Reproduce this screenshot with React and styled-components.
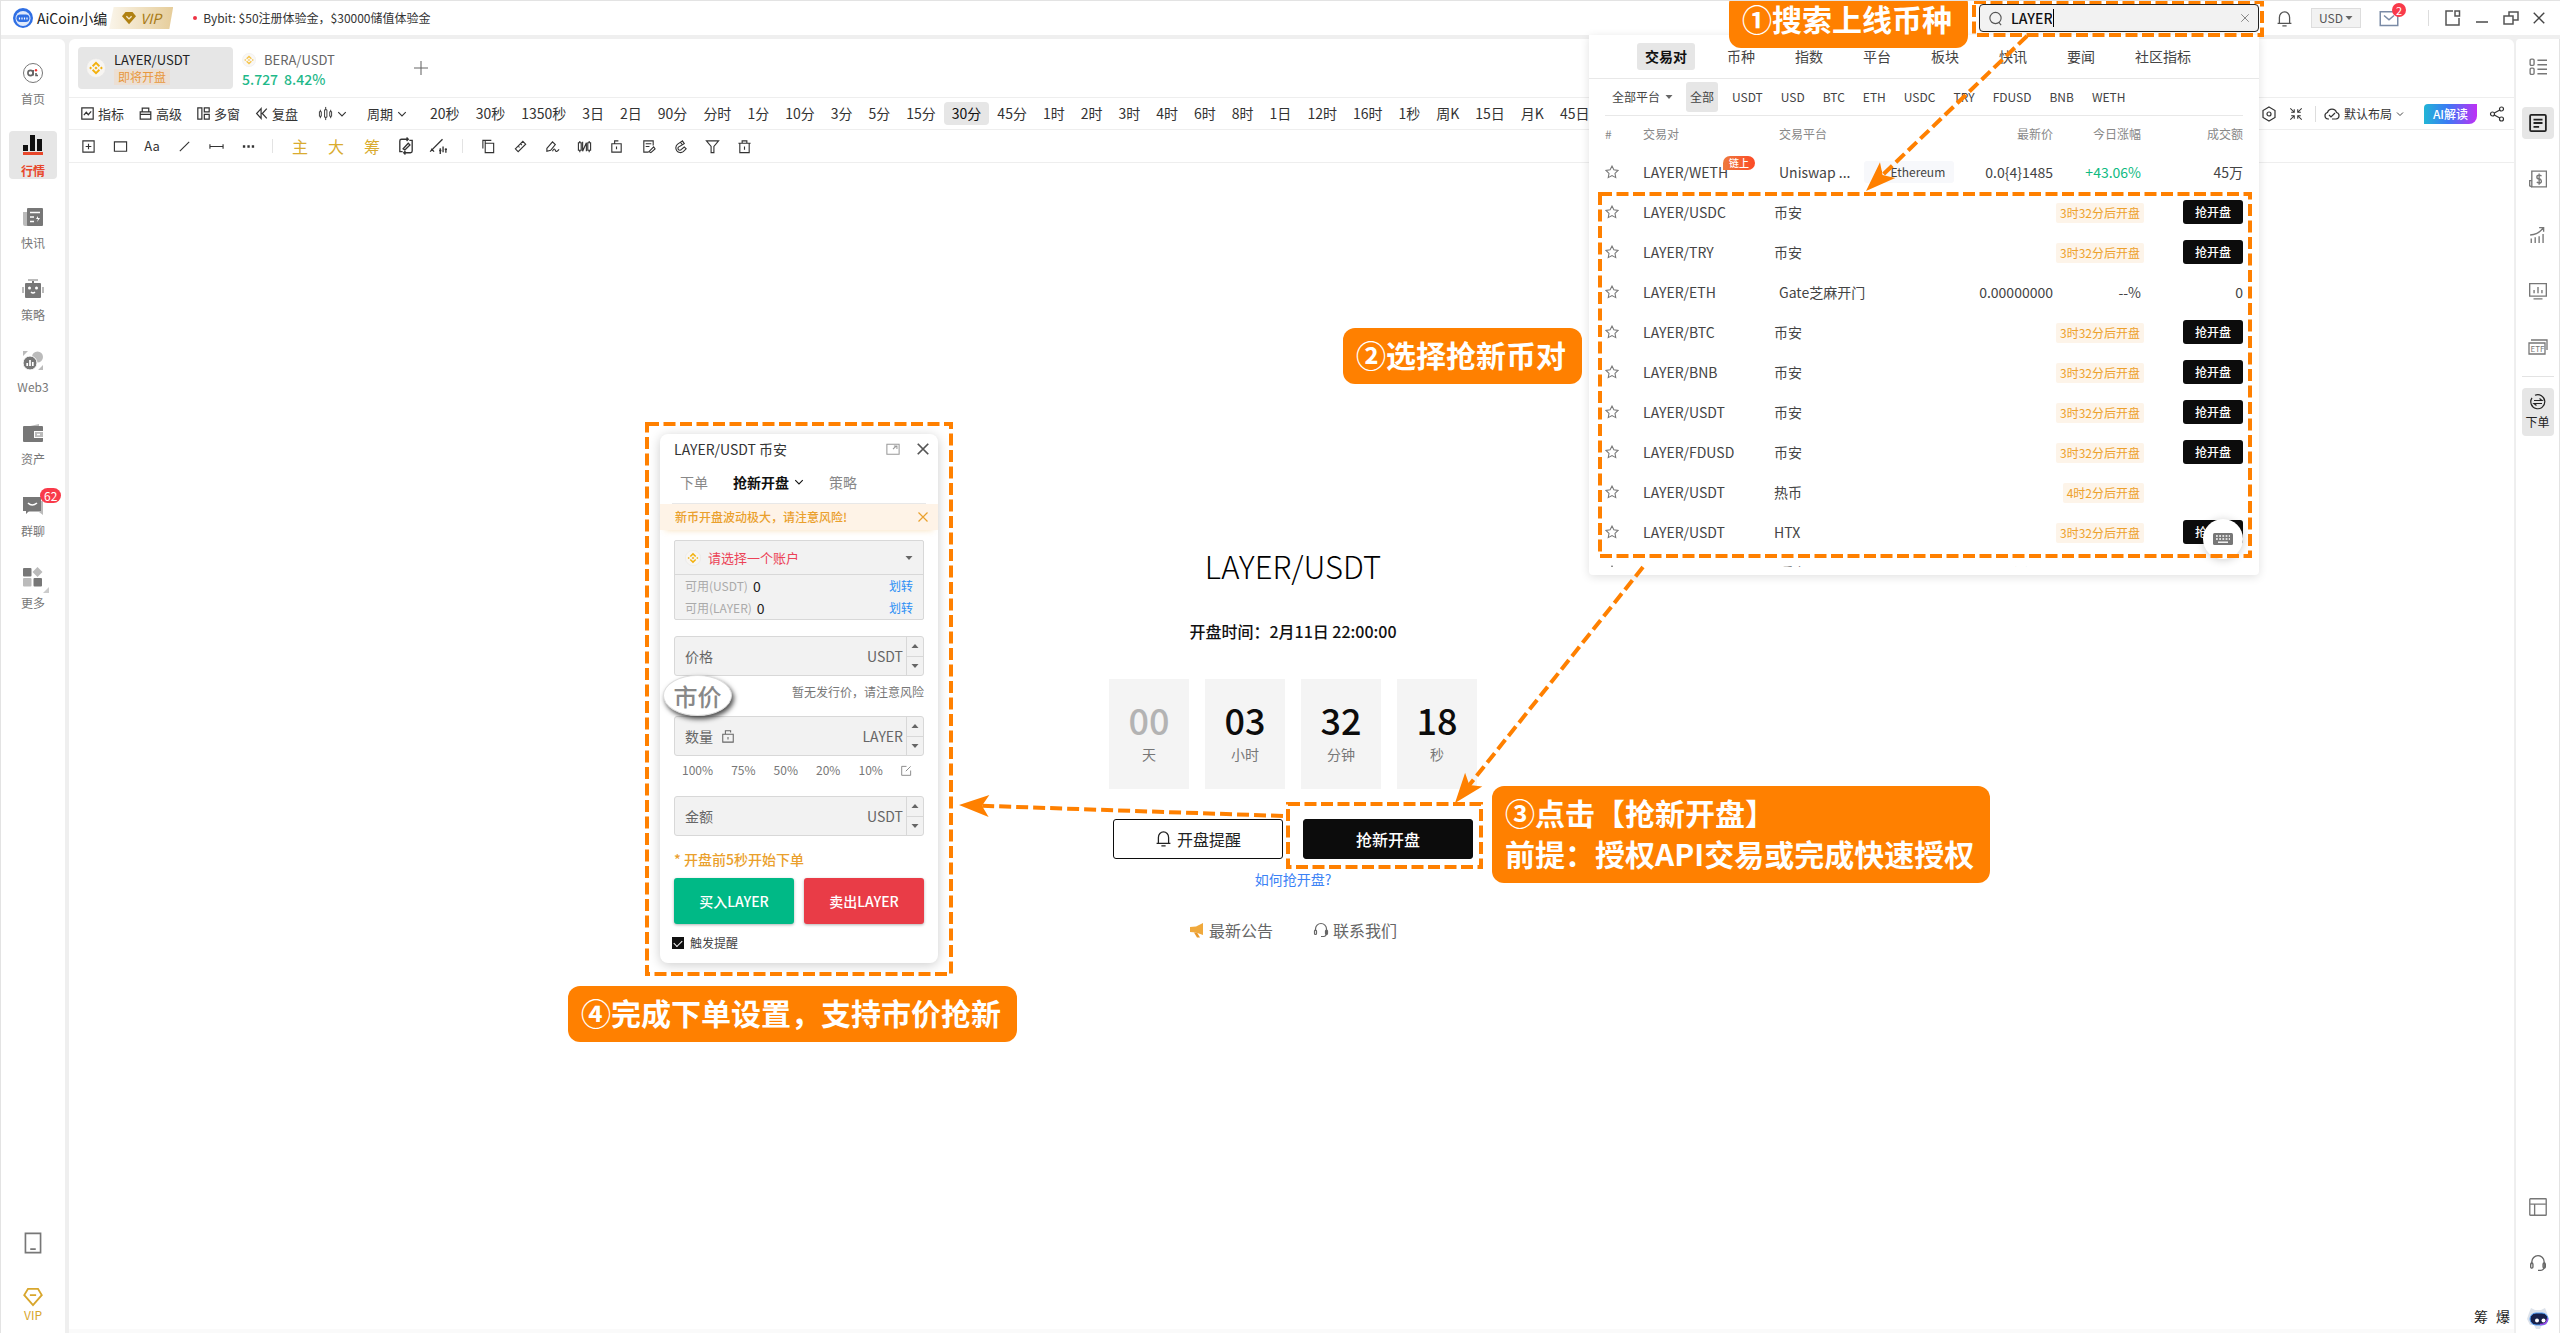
import styled, { createGlobalStyle } from "styled-components";

const GlobalStyle = createGlobalStyle`
    * { box-sizing: border-box; }
    body {
        margin: 0; background: #efefef; color: #333;
        font-family: "Noto Sans CJK SC", "Noto Sans", sans-serif; font-size: 14px; line-height: 20px;
    }
    button, input, select { font: inherit; color: inherit; background: none; border: 0; padding: 0; margin: 0; }
    button { cursor: pointer; white-space: nowrap; }
    a { color: inherit; text-decoration: none; }
    svg { display: block; flex: none; }
`

/* ---------- icons ---------- */

function Icon({ size = 16, color = "currentColor", width = 1.2, children }) {
    return (
        <svg width={size} height={size} viewBox="0 0 16 16" fill="none" stroke={color} strokeWidth={width}>
            {children}
        </svg>
    )
}

const Chevron = ({ size = 10 }) => <Icon size={size} width={1.8}><path d="M2 5l6 6 6-6" /></Icon>
const Caret = ({ size = 8, up }) => <Icon size={size}><path d={up ? "M1 12h14L8 4z" : "M1 4h14L8 12z"} fill="#666" stroke="none" /></Icon>
const Cross = ({ size = 12, color, width = 1.6 }) => <Icon size={size} color={color} width={width}><path d="M2 2l12 12M14 2L2 14" /></Icon>
const Bell = ({ size = 16 }) => <Icon size={size}><path d="M3.2 12.5V7a4.8 5.2 0 0 1 9.6 0v5.5M1.5 12.5h13M6 15h4" /></Icon>
const Star = () => <Icon size={14} color="#777"><path d="M8 1.2l2.1 4.3 4.8.7-3.5 3.4.9 4.8L8 12.1l-4.3 2.3.9-4.8L1.1 6.2l4.8-.7z" /></Icon>
const Headset = ({ size = 18, color }) => (
    <Icon size={size} color={color}>
        <path d="M2.5 9V7a5.5 5.5 0 0 1 11 0v4a3 3 0 0 1-3 3.5H8" />
        <rect x="1.5" y="8" width="2" height="4.5" rx="1" /><rect x="12.5" y="8" width="2" height="4.5" rx="1" />
    </Icon>
)
const Binance = ({ size = 20, faded }) => (
    <svg width={size} height={size} viewBox="0 0 20 20" opacity={faded ? 0.75 : 1}>
        <circle cx="10" cy="10" r="9.5" fill="#f7f5f2" stroke="#e4e4e4" strokeWidth=".6" />
        <g fill="none" stroke="#f3b10d" strokeWidth="1.9">
            <path d="M6.6 8.2L10 4.9l3.4 3.3M6.6 11.8L10 15.1l3.4-3.3" />
        </g>
        <path d="M10 8.4l1.6 1.6-1.6 1.6L8.4 10zM4.6 8.6L6 10l-1.4 1.4L3.2 10zM15.4 8.6l1.4 1.4-1.4 1.4L14 10z" fill="#f3b10d" />
    </svg>
)
const Avatar = () => (
    <svg width="20" height="20" viewBox="0 0 20 20">
        <circle cx="10" cy="10" r="10" fill="#2f6fe4" />
        <circle cx="10" cy="10.5" r="7.5" fill="#dfe9fb" />
        <rect x="3.5" y="6.5" width="13" height="7.5" rx="3.7" fill="#2f6fe4" />
        <path d="M6.5 11.5V9.5M9 11.5V9.5M11.5 11.5V9.5M14 11.5V9.5" stroke="#fff" strokeWidth="1.2" />
    </svg>
)
const Gem = () => <svg width="14" height="14" viewBox="0 0 16 16"><path d="M4 1h8l4 5-8 9-8-9z" fill="#b08112" /><path d="M5 6l3 3 3-3" stroke="#f6e8c8" strokeWidth="1.6" fill="none" /></svg>
const Robot = () => (
    <svg width="24" height="24" viewBox="0 0 24 24">
        <path d="M3 6l2-5 4 2h6l4-2 2 5 2 6-3 6h-4l-2 4h-4l-2-4H4l-3-6z" fill="#dde2ea" />
        <rect x="4" y="6" width="18" height="12" rx="6" fill="#17204a" stroke="#4e9af5" />
        <path d="M14 17.5c5 0 7.500-2 7.500-6" stroke="#a04af0" strokeWidth="1.5" fill="none" />
        <circle cx="11" cy="13.5" r="2" fill="#fff" /><circle cx="17.5" cy="13.5" r="2" fill="#fff" />
    </svg>
)

/* ---------- window header ---------- */

const Page = styled.div`
    position: relative; min-height: 100vh; overflow: hidden;
    display: flex; flex-direction: column;
    border-top: 1px solid #e3e3e3; border-left: 1px solid #e3e3e3;
`

const Header = styled.header`
    height: 34px; padding: 0 14px 0 12px; background: #fff;
    display: flex; align-items: center;
`

const UserName = styled.span`
    margin: 0 2px 0 4px; color: #222;
`

const VipBadge = styled.a`
    width: 64px; height: 22px; padding-left: 13px;
    display: flex; align-items: center; column-gap: 4px;
    background: linear-gradient(90deg, #faf5ea, #e6cd9a);
    clip-path: polygon(7% 0, 100% 0, 94% 100%, 0 100%);
    color: #a87b16; font-style: italic;
`

const Notice = styled.a`
    margin-left: 20px; display: flex; align-items: center; column-gap: 6px;
    font-size: 12px; color: #333;
    &::before { content: ""; width: 4px; height: 4px; border-radius: 2px; background: #ee3344; }
`

const SearchBox = styled.label`
    width: 280px; height: 28px; margin-left: auto; padding: 0 8px;
    display: flex; align-items: center; column-gap: 8px;
    background: #f2f2f2; border: 1px solid #222; border-radius: 4px; color: #555;
`

const SearchInput = styled.input`
    width: 41px; color: #111; font-weight: 500; outline: none;
`

const TextCursor = styled.i`
    width: 1px; height: 18px; margin: 0 auto 0 -7px; background: #000;
`

const HeaderTools = styled.div`
    margin-left: 17px; display: flex; align-items: center; color: #555;
`

const CurrencyBox = styled.label`
    width: 50px; height: 20px; margin: 0 18px; padding: 0 7px;
    display: flex; align-items: center; justify-content: space-between;
    background: #f2f2f2; border: 1px solid #ddd; font-size: 12px; line-height: 16px;
`

const PlainSelect = styled.select`
    appearance: none; outline: none; line-height: inherit;
`

const MailButton = styled.button`
    position: relative; padding-right: 29px;
`

const Badge = styled.span`
    position: absolute; top: ${props => props.$top}; left: ${props => props.$left};
    min-width: 14px; padding: 0 4px; border-radius: 8px;
    background: #f93a4a; color: #fff; font-size: ${props => props.$big ? "12px" : "11px"};
    line-height: ${props => props.$big ? "15px" : "14px"}; text-align: center; font-weight: 400;
`

const WindowButtons = styled.div`
    height: 16px; padding-left: 16px; border-left: 1px solid #ddd;
    display: flex; align-items: center; column-gap: 13px;
`

function TopBar() {
    return (
        <Header>
            <Avatar />
            <UserName>AiCoin小编</UserName>
            <VipBadge href="#vip"><Gem />VIP</VipBadge>
            <Notice href="#notice">Bybit: $50注册体验金，$30000储值体验金</Notice>
            <SearchBox>
                <Icon size={15}><circle cx="8" cy="7.5" r="6" /><path d="M11.5 12l2.500 3" /></Icon>
                <SearchInput defaultValue="LAYER" aria-label="搜索" />
                <TextCursor />
                <Cross size={10} color="#888" />
            </SearchBox>
            <HeaderTools>
                <button aria-label="通知"><Bell size={17} /></button>
                <CurrencyBox>
                    <PlainSelect aria-label="计价货币"><option>USD</option></PlainSelect>
                    <Caret />
                </CurrencyBox>
                <MailButton aria-label="消息">
                    <Icon size={20} color="#7a8ba6"><path d="M1 3h14v11H1zM4 6l4 3.500L12 6" /></Icon>
                    <Badge $top="-5px" $left="13px">2</Badge>
                </MailButton>
                <WindowButtons>
                    <button aria-label="停靠"><Icon width={1.5}><path d="M8 1H1v14h13V8" /><rect x="10" y="1" width="4.5" height="5" /></Icon></button>
                    <button aria-label="最小化"><Icon width={1.6}><path d="M2 12h12" /></Icon></button>
                    <button aria-label="还原"><Icon width={1.5}><path d="M1 6h9v8H1zM6 6V2h9v8h-5" /></Icon></button>
                    <button aria-label="关闭"><Cross size={14} color="#444" /></button>
                </WindowButtons>
            </HeaderTools>
        </Header>
    )
}

/* ---------- left navigation ---------- */

const Body = styled.div`
    flex: 1; margin-top: 4px; display: flex; column-gap: 4px;
`

const SideNav = styled.nav`
    width: 64px; padding: 20px 0 10px; background: #fff; border-radius: 0 6px 0 0;
    display: flex; flex-direction: column; align-items: center; row-gap: 24px;
`

const NavItem = styled.a`
    position: relative; width: 48px; height: 48px; padding-top: 4px; border-radius: 4px;
    display: flex; flex-direction: column; align-items: center; row-gap: 8px;
    background: ${props => props.$active ? "#e6e6e6" : "none"};
    color: ${props => props.$active ? "#e8472b" : "#777"};
    font-size: 12px; line-height: 16px; font-weight: ${props => props.$active ? 700 : 400};
`

const NavBottom = styled.div`
    margin-top: auto; display: flex; flex-direction: column; align-items: center; row-gap: 33px;
`

const VipLink = styled.a`
    display: flex; flex-direction: column; align-items: center;
    color: #d8a62c; font-size: 12px; line-height: 16px;
`

const NAV = [
    ["首页", <g><ellipse cx="10" cy="10" rx="9.5" ry="9.5" fill="none" stroke="#777" /><circle cx="7.5" cy="10" r="2.6" fill="none" stroke="#666" strokeWidth="1.6" /><path d="M10.2 7v5.500M13 10v2.500h2" fill="none" stroke="#666" strokeWidth="1.6" /><circle cx="13" cy="7.2" r="1.2" fill="#e33" /></g>],
    ["行情", <g><path d="M0 10h5v6H0zM7 0h5v16H7zM14 4h5v12h-5z" fill="#111" /><path d="M0 17h20v3H0z" fill="#e8472b" /></g>],
    ["快讯", <g><path d="M0 5h5v14H2a2 2 0 0 1-2-2z" fill="#bbb" /><rect x="4" y="1" width="16" height="18" rx="1" fill="#777" /><path d="M7 5.500h10M7 10h4M7 14.500h4" stroke="#fff" strokeWidth="1.5" /><path d="M15 9l-2 3h2l-1 3 3-4h-2z" fill="#fff" /></g>],
    ["策略", <g><path d="M5 1h10M0 8v6M20 8v6" stroke="#bbb" strokeWidth="2" /><path d="M10 2v3" stroke="#777" strokeWidth="2" /><rect x="2" y="4" width="16" height="15" rx="1" fill="#777" /><circle cx="6.5" cy="9" r="1.5" fill="#fff" /><circle cx="13.5" cy="9" r="1.5" fill="#fff" /><path d="M8 13q2 2 4 0" stroke="#fff" strokeWidth="1.5" fill="none" /></g>],
    ["Web3", <g><path d="M0 0h5L0 5zM20 14v5h-5z" fill="#bbb" /><circle cx="14.5" cy="6" r="5.5" fill="#bbb" /><ellipse cx="7" cy="12" rx="7" ry="7" fill="#777" stroke="#fff" /><path d="M4.2 15v-3M7 15V9M9.800 15v-4" stroke="#fff" strokeWidth="1.7" /></g>],
    ["资产", <g><path d="M3 4l13-3v4z" fill="#bbb" /><rect y="3" width="20" height="16" rx="1" fill="#777" /><rect x="11" y="8" width="9" height="7" fill="#fff" /><rect x="12" y="9" width="8" height="5" fill="#bbb" /><path d="M14 11.500h3" stroke="#fff" strokeWidth="1.5" /></g>],
    ["群聊", <g><path d="M5 6h15v14l-4-3H5z" fill="#bbb" /><path d="M0 2h18v14H6l-3 3v-3H0z" fill="#777" /><path d="M5 8q4 4 9 0" stroke="#fff" strokeWidth="1.6" fill="none" /></g>],
    ["更多", <g><rect y="1" width="8.5" height="8.5" rx="1" fill="#777" /><path d="M14.5 0l5 5-5 5-5-5z" fill="#bbb" /><rect y="11" width="8.5" height="8.5" rx="1" fill="#bbb" /><rect x="10.5" y="11" width="8.5" height="8.5" rx="1" fill="#777" /><path d="M26 20v6h-6z" fill="#ccc" /></g>],
]

function LeftNav() {
    return (
        <SideNav>
            {NAV.map(([name, art]) => (
                <NavItem key={name} href="#nav" $active={name == "行情"}>
                    <svg width="20" height="20" viewBox="0 0 20 20" overflow="visible">{art}</svg>
                    {name}
                    {name == "群聊" && <Badge $big $top="-3px" $left="31px">62</Badge>}
                </NavItem>
            ))}
            <NavBottom>
                <a href="#mobile" aria-label="手机版"><Icon size={22} color="#777"><path d="M2.500 1h11v14h-11zM6 12.500h4" /></Icon></a>
                <VipLink href="#vip">
                    <Icon size={20} width={1.5}><path d="M4 1.500h8l3 5-7 8-7-8zM5.500 6.500h5" /></Icon>
                    VIP
                </VipLink>
            </NavBottom>
        </SideNav>
    )
}

/* ---------- right tool rail ---------- */

const RightRail = styled.nav`
    width: 45px; margin-left: -3px; padding-top: 12px; background: #fff;
    border-left: 1px solid #eee; border-right: 1px solid #e3e3e3; border-radius: 4px 0 0 0;
    display: flex; flex-direction: column; align-items: center; row-gap: 24px; color: #777;
`

const RailButton = styled.button`
    width: 32px; height: ${props => props.$height || "32px"}; border-radius: 4px;
    display: flex; flex-direction: column; align-items: center; justify-content: center; row-gap: 3px;
    background: ${props => props.$active ? "#e6e6e6" : "none"};
    color: ${props => props.$active ? "#222" : "#777"};
    font-size: 12px; line-height: 18px;
`

const RailTrade = styled.div`
    padding-top: 11px; margin-top: -11px; border-top: 1px solid #e3e3e3;
`

const RailBottom = styled.div`
    margin-top: auto; display: flex; flex-direction: column; align-items: center; row-gap: 28px;
`

function ToolRail() {
    return (
        <RightRail>
            <RailButton aria-label="自选"><Icon size={18}><rect x="1" y="1" width="3.5" height="5.5" rx="1" /><rect x="1" y="9" width="3.5" height="5.5" rx="1" /><path d="M7.500 2H16M7.500 6H16M7.500 10H16M7.500 14H16" /></Icon></RailButton>
            <RailButton aria-label="资讯" $active><Icon size={18} width={1.6}><rect x="1" y=".8" width="14" height="14.4" rx="1" /><path d="M4 5h8M4 8h8M4 11.500h5" /></Icon></RailButton>
            <RailButton aria-label="资金"><Icon size={18}><path d="M2.500 9V1h13v14h-13z" /><path d="M2.500 9.500H.600V14l2 1M11 5.500Q10.500 4.500 9 4.500 7 4.500 7 6.200T9 8t2 1.900-2 1.700q-1.500 0-2-1M9 3.200v9.800" /></Icon></RailButton>
            <RailButton aria-label="趋势"><Icon size={18}><path d="M2 15v-4M5.500 15v-5M9 15V9M12.500 15V7M1 8q7-.5 11.500-6M9 1.500h4V5" /></Icon></RailButton>
            <RailButton aria-label="盘面"><Icon size={18}><path d="M.600 1.500h14.800v11H.600zM4.500 10V7M8 10V4.500M11.500 10V7M4 15h8" /></Icon></RailButton>
            <RailButton aria-label="ETF">
                <svg width="20" height="16" viewBox="0 0 20 16" fill="none" stroke="#777" strokeWidth="1.3">
                    <path d="M1 4h16v11H1zM3 1h16v10" /><text x="2.5" y="12.5" fontSize="8" fill="#777" stroke="none">ETF</text>
                </svg>
            </RailButton>
            <RailTrade>
                <RailButton $active $height="48px">
                    <Icon size={16}><path d="M5 1.300a7 7 0 1 1-3 2.500M4 6.500h8L9.500 4.500M12 9.500H4l2.500 2" /></Icon>
                    下单
                </RailButton>
            </RailTrade>
            <RailBottom>
                <RailButton $height="28px" aria-label="布局"><Icon size={18}><rect x=".7" y=".7" width="14.6" height="14.6" rx=".5" /><path d="M1 5.500h14M5 5.500V15" /></Icon></RailButton>
                <RailButton $height="28px" aria-label="客服"><Headset size={18} color="#666" /></RailButton>
                <RailButton $height="28px" aria-label="AI助手"><Robot /></RailButton>
            </RailBottom>
        </RightRail>
    )
}

/* ---------- chart area ---------- */

const Main = styled.main`
    flex: 1; min-width: 0; background: #fff; border-radius: 6px 6px 0 0;
    display: flex; flex-direction: column;
`

const PairTabs = styled.div`
    height: 59px; padding: 8px 9px; border-bottom: 1px solid #eee;
    display: flex; align-items: flex-start;
`

const ActivePair = styled.button`
    width: 155px; height: 42px; padding-left: 8px; border-radius: 4px; background: #e6e6e6;
    display: flex; align-items: center; column-gap: 8px;
    color: #222; font-size: 13px; line-height: 18px; text-align: left;
`

const OpeningTag = styled.span`
    display: block; width: 56px; padding: 0 4px; background: #ecdfd3; color: #e8983c;
    font-size: 12px; line-height: 16px;
`

const PairTab = styled.button`
    height: 42px; padding: 4px 9px; text-align: left; color: #666; font-size: 13px; line-height: 18px;
`

const PairName = styled.span`
    display: flex; align-items: center; column-gap: 8px;
`

const PairQuote = styled.span`
    display: flex; column-gap: 6px; color: #1fb98a; font-size: 14px; line-height: 20px; font-weight: 500;
`

const AddTab = styled.button`
    margin: 14px 0 0 70px; color: #666;
`

const ToolRow = styled.div`
    height: ${props => props.$height}; padding: 0 9px 0 12px; border-bottom: 1px solid #eee;
    display: flex; align-items: center; overflow: hidden; color: #333;
`

const ToolButton = styled.button`
    display: flex; align-items: center; column-gap: 4px;
    font-size: 13px; margin-right: ${props => props.$space || "15px"};
`

const Period = styled.button`
    height: 23px; padding: 0 8px; border-radius: 4px; line-height: 23px;
    background: ${props => props.$active ? "#e6e6e6" : "none"};
    color: ${props => props.$active ? "#111" : "#333"};
`

const LayoutTools = styled.div`
    margin-left: auto; display: flex; align-items: center; column-gap: 12px; font-size: 12px;
`

const LayoutButton = styled.button`
    height: 16px; padding-left: 8px; border-left: 1px solid #ddd; margin-right: 8px;
    display: flex; align-items: center; column-gap: 4px; line-height: 16px;
`

const AiButton = styled.button`
    width: 53px; height: 20px; border-radius: 4px 0 8px 0; color: #fff; font-weight: 500; line-height: 20px;
    background: linear-gradient(90deg, #21b5d6, #3c79f5 45%, #c02ff5);
`

const DrawButtons = styled.div`
    margin-left: -9px; display: flex; align-items: center;
`

const DrawButton = styled.button`
    width: ${props => props.$wide ? "36px" : "32px"};
    display: flex; justify-content: center; font-size: ${props => props.$wide ? "16px" : "13px"};
    color: ${props => props.$wide ? "#d9ab2f" : "#333"};
`

const Divider = styled.i`
    width: 1px; height: 14px; margin: 0 9px 0 8px; background: #e3e3e3;
`

const PERIODS = ["20秒", "30秒", "1350秒", "3日", "2日", "90分", "分时", "1分", "10分", "3分", "5分", "15分", "30分", "45分",
    "1时", "2时", "3时", "4时", "6时", "8时", "1日", "12时", "16时", "1秒", "周K", "15日", "月K", "45日"]

const SHAPES = [
    ["锚点", <path d="M2 2h12v12H2zM8 5v6M5 8h6" />],
    ["矩形", <path d="M1.500 3h13v10h-13z" />],
    ["文字", null],
    ["线段", <path d="M3 13L13 3" />],
    ["水平线", <path d="M1 8h14M1 5.500v5M15 5.500v5" />],
    ["更多图形", <path d="M2 8h2.500M6.800 8h2.500M11.500 8H14" strokeWidth="2.6" />],
]

const EDITS = [
    ["复制", <path d="M4.500 4.500h9v10h-9zM2 10V1.500h9M4.500 1.500v3" />],
    ["画笔", <path d="M2.500 10.500l8-8 3 3-8 8zM8 5l1.500 1.500M5.500 7.500L7 9" />],
    ["曲线", <path d="M2 10l6-7 3 3-5 6-4 1zM8 13q2-4 3-1t4-1" />],
    ["对比", <path d="M1.500 4h3v8h-3zM11.500 4h3v8h-3zM6 3v10l4-9v9M3 2v2M13 2v2M3 12v2M13 12v2" />],
    ["锁定", <path d="M3 5h10v9H3zM6 5V2h4M8 8v3" />],
    ["笔记", <path d="M13 7V2H3v12h5M5 5h6M5 8h4M8.500 13.500l5-5 1.500 2-4.500 4z" />],
    ["磁吸", <path d="M10 2L5 5.500a5 5 0 1 0 6 8l3-3-2-2-3 2.500a2 2 0 1 1-2-3L12 5zM8 3.500l2 2.800" />],
    ["筛选", <path d="M1.500 2h13L9.500 8v6.500h-3V8z" />],
    ["删除", <path d="M1.500 4.500h13M5.500 4.500V2h5v2.500M3 4.500v10h10v-10M8 8v3.500" />],
]

function Toolbar() {
    return (
        <ToolRow $height="32px">
            <ToolButton><Icon size={13} width={1.5}><path d="M1 1h14v14H1zM3.500 10l3-3.500 2.500 3 3.500-4" /></Icon>指标</ToolButton>
            <ToolButton><Icon size={13} width={1.5}><path d="M1.500 6h13v9h-13zM4 6V1.500h8V6M1.500 9h13" /></Icon>高级</ToolButton>
            <ToolButton><Icon size={13} width={1.5}><path d="M1 1h5v14H1zM9 1h6v5H9zM9 9h6v6H9z" /></Icon>多窗</ToolButton>
            <ToolButton $space="20px"><Icon size={13} width={1.5}><path d="M7.500 2L2 8l5.500 6zM14.500 2L9 8l5.500 6" /></Icon>复盘</ToolButton>
            <ToolButton $space="20px" aria-label="K线样式">
                <Icon size={15} width={1}><path d="M1.500 6h2v5h-2zM7 4h2.500v8H7zM12.500 6h2v5h-2zM2.500 4v2M2.500 11v2M8.200 1v3M8.200 12v3M13.500 4v2M13.500 11v2" /></Icon>
                <Chevron />
            </ToolButton>
            <ToolButton $space="15px">周期 <Chevron /></ToolButton>
            {PERIODS.map(name => <Period key={name} $active={name == "30分"}>{name}</Period>)}
            <LayoutTools>
                <button aria-label="设置"><Icon><path d="M8 1l6 3.500v7L8 15l-6-3.500v-7z" /><circle cx="8" cy="8" r="2" /></Icon></button>
                <button aria-label="收起"><Icon size={14}><path d="M1.500 1.500L6 6M6 2.500V6H2.500M14.500 1.500L10 6M10 2.500V6h3.500M1.500 14.500L6 10M6 13.500V10H2.500M14.500 14.500L10 10M10 13.500V10h3.500" /></Icon></button>
                <LayoutButton>
                    <Icon><path d="M5 13H4a3.300 3.300 0 0 1-.5-6.500 4.700 4.700 0 0 1 9 0A3.300 3.300 0 0 1 12 13H8M5 9l2 2 4-4" /></Icon>
                    默认布局 <Chevron size={8} />
                </LayoutButton>
                <AiButton>AI解读</AiButton>
                <button aria-label="分享"><Icon><circle cx="3.5" cy="8" r="2" /><circle cx="12.5" cy="3" r="2" /><circle cx="12.5" cy="13" r="2" /><path d="M5.300 7l5.500-3M5.300 9l5.500 3" /></Icon></button>
            </LayoutTools>
        </ToolRow>
    )
}

function DrawTools() {
    return (
        <ToolRow $height="33px">
            <DrawButtons>
                {SHAPES.map(([name, art]) => <DrawButton key={name} aria-label={name}>{art ? <Icon size={15}>{art}</Icon> : "Aa"}</DrawButton>)}
                <Divider />
                <DrawButton $wide>主</DrawButton>
                <DrawButton $wide>大</DrawButton>
                <DrawButton $wide>筹</DrawButton>
                <DrawButton aria-label="循环编辑"><Icon size={18}><path d="M5 13H2.500V3.500Q2.500 2 4 2h6M8.500 .5L10 2 8.500 3.500M11 3h2.500v9.500q0 1.500-1.500 1.500H6M7.500 12.500L6 14l1.500 1.500M5.500 10.500l4.500-5 1.500 1.500-4.500 4.500z" /></Icon></DrawButton>
                <DrawButton aria-label="画线指标"><Icon size={18}><path d="M1 13L12 2M2 10.500l2.500 2.500M10 10v5M12.500 8.500v5M15 10v4M9 12h2M14 11h2" /></Icon></DrawButton>
                <Divider />
                {EDITS.map(([name, art]) => <DrawButton key={name} aria-label={name}><Icon size={15}>{art}</Icon></DrawButton>)}
            </DrawButtons>
        </ToolRow>
    )
}

/* ---------- countdown ---------- */

const Countdown = styled.section`
    flex: 1; padding: 0 0 5px 3px; border-bottom: 1px solid #eee;
    display: flex; flex-direction: column; align-items: center; justify-content: center;
`

const CoinTitle = styled.h1`
    margin: 0; font-size: 31px; line-height: 40px; font-weight: 300; color: #000;
`

const OpenTime = styled.p`
    margin: 33px 0 36px; font-size: 16px; line-height: 24px; font-weight: 500; color: #111;
`

const Clock = styled.div`
    display: flex; column-gap: 16px;
`

const ClockCell = styled.div`
    width: 80px; height: 110px; padding-top: 18px; background: #f4f4f4; text-align: center; color: #777;
`

const ClockNumber = styled.div`
    margin-bottom: 3px; font-size: 36px; line-height: 44px; font-weight: 500;
    color: ${props => props.$muted ? "#b3b3b3" : "#0c0c0c"};
`

const Actions = styled.div`
    margin: 30px 0 10px; display: flex; column-gap: 20px;
`

const ActionButton = styled.button`
    width: 170px; height: 40px; border: 1px solid #0c0c0c; border-radius: 3px;
    display: flex; align-items: center; justify-content: center; column-gap: 5px; font-size: 16px;
    background: ${props => props.$dark ? "#0c0c0c" : "#fff"};
    color: ${props => props.$dark ? "#fff" : "#222"};
    font-weight: ${props => props.$dark ? 500 : 400};
`

const HelpLink = styled.a`
    color: #3b82f6;
`

const Links = styled.div`
    margin-top: 29px; display: flex; column-gap: 40px; font-size: 16px; line-height: 24px; color: #666;
`

const IconLink = styled.a`
    display: flex; align-items: center; column-gap: 4px;
`

const StatusLine = styled.div`
    height: 30px; margin-top: -31px; padding: 3px 4px 0;
    display: flex; justify-content: flex-end; align-items: center; column-gap: 8px; color: #222;
`

const Foot = styled.div`
    height: 4px; background: #fafafa;
`

const UNITS = [["00", "天"], ["03", "小时"], ["32", "分钟"], ["18", "秒"]]

function Launch() {
    return (
        <Countdown>
            <CoinTitle>LAYER/USDT</CoinTitle>
            <OpenTime>开盘时间：2月11日 22:00:00</OpenTime>
            <Clock>
                {UNITS.map(([value, unit]) => (
                    <ClockCell key={unit}><ClockNumber $muted={value == "00"}>{value}</ClockNumber>{unit}</ClockCell>
                ))}
            </Clock>
            <Actions>
                <ActionButton><Bell size={17} />开盘提醒</ActionButton>
                <ActionButton $dark>抢新开盘</ActionButton>
            </Actions>
            <HelpLink href="#help">如何抢开盘?</HelpLink>
            <Links>
                <IconLink href="#news">
                    <svg width="16" height="16" viewBox="0 0 16 16"><path d="M14 1v12L7 10.500 1 10V5l6-.5z" fill="#f0a93c" /><path d="M5 10.500h3l3 5H8z" fill="#e8982a" /></svg>
                    最新公告
                </IconLink>
                <IconLink href="#contact"><Headset size={16} />联系我们</IconLink>
            </Links>
        </Countdown>
    )
}

/* ---------- search dropdown ---------- */

const Dropdown = styled.section`
    position: absolute; top: 34px; right: 301px; z-index: 2; width: 670px; height: 540px;
    background: #fff; box-shadow: 0 2px 10px rgba(0,0,0,0.12); border-radius: 0 0 4px 4px;
    display: flex; flex-direction: column;
`

const KindTabs = styled.div`
    height: 44px; padding: 8px 48px; border-bottom: 1px solid #e8e8e8;
    display: flex; column-gap: 24px;
`

const KindTab = styled.button`
    height: 27px; padding: 0 8px; border-radius: 3px; line-height: 27px;
    background: ${props => props.$active ? "#e6e6e6" : "none"};
    color: ${props => props.$active ? "#111" : "#444"};
    font-weight: ${props => props.$active ? 700 : 400};
`

const Filters = styled.div`
    height: 37px; margin: 0 16px; padding: 3px 7px; border-bottom: 1px solid #e8e8e8;
    display: flex; column-gap: 10px; font-size: 12px; color: #444;
`

const PlatformBox = styled.label`
    margin-right: 3px; height: 30px; display: flex; align-items: center; column-gap: 4px;
`

const Filter = styled.button`
    height: 30px; padding: 0 4px; border-radius: 3px; line-height: 30px;
    background: ${props => props.$active ? "#e6e6e6" : "none"};
`

const TableClip = styled.div`
    flex: 1; min-height: 0; margin: 0 16px 8px; overflow: hidden;
`

const Table = styled.table`
    width: 100%; table-layout: fixed; border-collapse: collapse;
`

const Head = styled.th`
    width: ${props => props.$width}; height: 36px; padding: 0 ${props => props.$pad || "0"} 0 0;
    text-align: ${props => props.$align || "left"}; font-size: 12px; font-weight: 400; color: #888;
`

const Cell = styled.td`
    height: 40px; padding: 0 ${props => props.$pad || "0"} 0 0; white-space: nowrap;
    text-align: ${props => props.$align || "left"}; color: ${props => props.$up ? "#0fba81" : "#444"};
`

const Exchange = styled.div`
    display: flex; align-items: center; column-gap: 14px; margin-left: ${props => props.$close ? "-5px" : "0"};
`

const Chain = styled.span`
    height: 22px; padding: 0 9px 0 10px; border-radius: 3px; background: #f7f8fb;
    display: flex; align-items: center; column-gap: 6px; font-size: 12px;
`

const PairCell = styled.span`
    position: relative;
`

const OnChain = styled.span`
    position: absolute; top: -6px; left: 80px; padding: 0 6px; border-radius: 7px 7px 7px 0;
    background: linear-gradient(90deg, #ee7a3f, #fc4a26); color: #fff; font-size: 10px; line-height: 14px; font-weight: 500;
`

const OpenIn = styled.span`
    display: inline-block; padding: 0 4px; border-radius: 2px; background: #fdf4e9; color: #eda12b;
    font-size: 12px; line-height: 20px;
`

const GrabButton = styled.button`
    width: 60px; height: 24px; border-radius: 3px; background: #0c0c0c; color: #fff;
    font-size: 12px; line-height: 24px; font-weight: 500;
`

const KeyboardButton = styled.button`
    position: absolute; right: 16px; bottom: 16px; width: 40px; height: 40px; border-radius: 20px;
    display: flex; align-items: center; justify-content: center;
    background: #fff; box-shadow: 0 1px 8px rgba(0,0,0,0.2);
`

const KINDS = ["交易对", "币种", "指数", "平台", "板块", "快讯", "要闻", "社区指标"]
const QUOTES = ["全部", "USDT", "USD", "BTC", "ETH", "USDC", "TRY", "FDUSD", "BNB", "WETH"]
const ROWS = [
    { pair: "LAYER/WETH", at: "Uniswap ...", chain: "Ethereum", price: "0.0{4}1485", change: "+43.06%", amount: "45万" },
    { pair: "LAYER/USDC", at: "币安", open: "3时32分后开盘", grab: true },
    { pair: "LAYER/TRY", at: "币安", open: "3时32分后开盘", grab: true },
    { pair: "LAYER/ETH", at: "Gate芝麻开门", price: "0.00000000", change: "--%", amount: "0" },
    { pair: "LAYER/BTC", at: "币安", open: "3时32分后开盘", grab: true },
    { pair: "LAYER/BNB", at: "币安", open: "3时32分后开盘", grab: true },
    { pair: "LAYER/USDT", at: "币安", open: "3时32分后开盘", grab: true },
    { pair: "LAYER/FDUSD", at: "币安", open: "3时32分后开盘", grab: true },
    { pair: "LAYER/USDT", at: "热币", open: "4时2分后开盘" },
    { pair: "LAYER/USDT", at: "HTX", open: "3时32分后开盘", grab: true },
    { pair: "LAYER/USDT", at: "币安", price: "70.0(4)130", change: "+0.41%", amount: "173万" },
]

function SearchDropdown() {
    return (
        <Dropdown>
            <KindTabs>
                {KINDS.map(name => <KindTab key={name} $active={name == "交易对"}>{name}</KindTab>)}
            </KindTabs>
            <Filters>
                <PlatformBox>
                    <PlainSelect aria-label="平台"><option>全部平台</option></PlainSelect>
                    <Caret />
                </PlatformBox>
                {QUOTES.map(name => <Filter key={name} $active={name == "全部"}>{name}</Filter>)}
            </Filters>
            <TableClip>
                <Table>
                    <thead>
                        <tr>
                            <Head $width="38px">#</Head>
                            <Head $width="136px">交易对</Head>
                            <Head $width="180px">交易平台</Head>
                            <Head $align="right">最新价</Head>
                            <Head $width="91px" $align="right" $pad="3px">今日涨幅</Head>
                            <Head $width="99px" $align="right">成交额</Head>
                        </tr>
                    </thead>
                    <tbody>
                        {ROWS.map((row, i) => (
                            <tr key={i}>
                                <Cell><Star /></Cell>
                                <Cell><PairCell>{row.pair}{row.chain && <OnChain>链上</OnChain>}</PairCell></Cell>
                                <Cell>
                                    <Exchange $close={!!row.open}>
                                        {row.at}
                                        {row.chain && <Chain><Icon size={10}><path d="M8 0l5 8-5 3-5-3zM3 10l5 6 5-6-5 3z" fill="#333" stroke="none" /></Icon>{row.chain}</Chain>}
                                    </Exchange>
                                </Cell>
                                <Cell $align="right">{row.price}</Cell>
                                <Cell $align="right" $pad={row.open ? "0" : "3px"} $up={row.change && row.change[0] == "+"}>
                                    {row.open ? <OpenIn>{row.open}</OpenIn> : row.change}
                                </Cell>
                                <Cell $align="right">{row.grab ? <GrabButton>抢开盘</GrabButton> : row.amount}</Cell>
                            </tr>
                        ))}
                    </tbody>
                </Table>
            </TableClip>
            <KeyboardButton aria-label="键盘">
                <svg width="20" height="12" viewBox="0 0 20 12"><rect width="20" height="12" rx="1.5" fill="#777" /><path d="M3 3h14M3 6h14" stroke="#fff" strokeWidth="1.5" strokeDasharray="1.8 1.4" /><path d="M5 9.200h10" stroke="#fff" strokeWidth="1.4" /></svg>
            </KeyboardButton>
        </Dropdown>
    )
}

/* ---------- order window ---------- */

const OrderWindow = styled.section`
    position: absolute; top: 433px; left: 659px; z-index: 2; width: 278px; padding-bottom: 10px;
    background: #fff; border-radius: 8px; box-shadow: 0 2px 12px rgba(0,0,0,0.2);
`

const OrderHead = styled.div`
    height: 30px; padding: 0 8px 0 14px; display: flex; align-items: center; color: #333;
`

const OrderTitle = styled.span`
    margin-right: auto;
`

const OrderClose = styled.button`
    margin-left: 16px;
`

const OrderTabs = styled.div`
    height: 40px; margin: 0 12px; padding: 0 9px 3px 8px; border-bottom: 1px solid #e8e8e8;
    display: flex; align-items: center; column-gap: 25px; color: #888;
`

const OrderTab = styled.button`
    display: flex; align-items: center; column-gap: 5px;
    color: ${props => props.$active ? "#111" : "#888"};
    font-weight: ${props => props.$active ? 700 : 400};
`

const Warning = styled.div`
    height: 26px; padding: 0 9px 0 15px; background: #fef3e7; color: #eaa02c; font-size: 12px; font-weight: 500;
    box-shadow: 0 5px 6px -5px rgba(234,160,44,0.35);
    display: flex; align-items: center; justify-content: space-between;
`

const OrderForm = styled.form`
    padding: 10px 14px 0; display: flex; flex-direction: column;
`

const Account = styled.div`
    height: 80px; margin-bottom: 16px; border: 1px solid #d8d8d8; border-radius: 2px; background: #f2f2f2;
`

const AccountPick = styled.label`
    height: 34px; padding: 0 10px; border-bottom: 1px solid #d8d8d8;
    display: flex; align-items: center; column-gap: 7px; color: #ec4257; font-size: 13px;
`

const AccountSelect = styled(PlainSelect)`
    flex: 1;
`

const Balance = styled.div`
    height: 22px; padding: 0 10px; display: flex; align-items: center; column-gap: 5px;
    font-size: 12px; color: #aaa;
`

const Amount = styled.span`
    color: #222; font-size: 14px;
`

const Transfer = styled.a`
    margin-left: auto; color: #2b8ff5;
`

const Field = styled.label`
    height: 40px; border: 1px solid #d8d8d8; border-radius: 3px; background: #f2f2f2;
    display: flex; align-items: center; padding-left: 10px; column-gap: 8px; color: #666;
`

const FieldInput = styled.input`
    flex: 1; min-width: 0; outline: none;
`

const Unit = styled.span`
    margin-right: -5px;
`

const Stepper = styled.span`
    width: 17px; height: 38px; border-left: 1px solid #d8d8d8; display: flex; flex-direction: column;
`

const Step = styled.button`
    flex: 1; display: flex; align-items: center; justify-content: center;
    &:first-child { border-bottom: 1px solid #d8d8d8; }
`

const Hint = styled.p`
    margin: 6px 0 14px; font-size: 12px; text-align: right; color: #777;
`

const Percents = styled.div`
    height: 40px; padding: 0 12px 12px 8px; display: flex; align-items: center; justify-content: space-between;
    font-size: 12px; color: #777;
`

const StartNote = styled.p`
    margin: 13px 0 9px; color: #eaa02c; font-weight: 500;
`

const TradeButtons = styled.div`
    display: flex; column-gap: 10px;
`

const TradeButton = styled.button`
    flex: 1; height: 46px; border-radius: 3px; color: #fff; font-weight: 500;
    background: ${props => props.$sell ? "#e93c47" : "#00b986"};
    box-shadow: 0 1px 3px rgba(0,0,0,0.3);
`

const Remind = styled.label`
    margin: 9px 0 0 -2px; display: flex; align-items: center; column-gap: 6px; font-size: 12px; color: #444;
`

const Check = styled.input`
    appearance: none; width: 12px; height: 12px; background: #111; display: grid; place-items: center;
    &:checked::after { content: ""; width: 7px; height: 4px; margin-top: -2px; border: solid #fff; border-width: 0 0 1px 1px; transform: rotate(-45deg); }
`

const MarketPrice = styled.button`
    position: absolute; top: 241px; left: 3px; width: 69px; height: 41px; border-radius: 50%;
    background: #fff; border: 1px solid #ddd; box-shadow: 2px 3px 5px rgba(0,0,0,0.7);
    color: #888; font-size: 24px; line-height: 36px; font-weight: 500;
`

function OrderField({ label, unit, icon }) {
    return (
        <Field>
            {label}{icon}
            <FieldInput />
            <Unit>{unit}</Unit>
            <Stepper>
                <Step type="button" aria-label={label + "增加"}><Caret up /></Step>
                <Step type="button" aria-label={label + "减少"}><Caret /></Step>
            </Stepper>
        </Field>
    )
}

function OrderPanel() {
    return (
        <OrderWindow>
            <OrderHead>
                <OrderTitle>LAYER/USDT 币安</OrderTitle>
                <button aria-label="弹出"><Icon size={14} color="#999"><path d="M1 2.500h14v11.500H1zM8 8l4-3.500M9 4.500h3.500V8" /></Icon></button>
                <OrderClose aria-label="关闭"><Cross size={14} color="#555" width={2} /></OrderClose>
            </OrderHead>
            <OrderTabs>
                <OrderTab>下单</OrderTab>
                <OrderTab $active>抢新开盘 <Chevron /></OrderTab>
                <OrderTab>策略</OrderTab>
            </OrderTabs>
            <Warning>新币开盘波动极大，请注意风险!<button aria-label="关闭提示"><Cross size={12} /></button></Warning>
            <OrderForm>
                <Account>
                    <AccountPick>
                        <Binance size={16} />
                        <AccountSelect aria-label="账户"><option>请选择一个账户</option></AccountSelect>
                        <Caret />
                    </AccountPick>
                    <Balance>可用(USDT) <Amount>0</Amount><Transfer href="#t">划转</Transfer></Balance>
                    <Balance>可用(LAYER) <Amount>0</Amount><Transfer href="#t">划转</Transfer></Balance>
                </Account>
                <OrderField label="价格" unit="USDT" />
                <Hint>暂无发行价，请注意风险</Hint>
                <OrderField label="数量" unit="LAYER" icon={<Icon size={14}><path d="M2 6h12v9H2zM5 6V2h6v2M8 9v3" /></Icon>} />
                <Percents>
                    {["100%", "75%", "50%", "20%", "10%"].map(p => <button type="button" key={p}>{p}</button>)}
                    <button type="button" aria-label="自定义比例"><Icon size={11}><path d="M8 2H1v13h13V8M7 9l7-7" /></Icon></button>
                </Percents>
                <OrderField label="金额" unit="USDT" />
                <StartNote>* 开盘前5秒开始下单</StartNote>
                <TradeButtons>
                    <TradeButton type="button">买入LAYER</TradeButton>
                    <TradeButton type="button" $sell>卖出LAYER</TradeButton>
                </TradeButtons>
                <Remind><Check type="checkbox" defaultChecked />触发提醒</Remind>
            </OrderForm>
            <MarketPrice>市价</MarketPrice>
        </OrderWindow>
    )
}

/* ---------- tutorial marks ---------- */

const Marks = styled.svg`
    position: absolute; top: -1px; left: -1px; z-index: 3; pointer-events: none;
`

const Tip = styled.div`
    position: absolute; z-index: 4; top: ${props => props.$top}; left: ${props => props.$left};
    padding: 6px 16px 9px 13px; border-radius: 12px; background: #ff8000; color: #fff;
    font-size: 30px; line-height: 41px; font-weight: 700; white-space: nowrap;
`

function Arrow({ from, to }) {
    const dx = to[0] - from[0], dy = to[1] - from[1]
    const length = Math.hypot(dx, dy)
    const angle = Math.atan2(dy, dx) * 180 / Math.PI
    return (
        <g transform={`translate(${from[0]} ${from[1]}) rotate(${angle})`}>
            <path d={`M0 0H${length - 22}`} stroke="#ff8000" strokeWidth="4" strokeDasharray="12 5" />
            <path d={`M${length} 0l-30 -11 7 11 -7 11z`} fill="#ff8000" />
        </g>
    )
}

function Tutorial() {
    return (
        <>
            <Marks width="2560" height="1333" fill="none">
                <g stroke="#ff8000" strokeWidth="4" strokeDasharray="12 4.5">
                    <rect x="1974" y="2" width="288" height="33" />
                    <rect x="1600" y="194" width="650" height="362" />
                    <rect x="1288" y="804" width="193" height="63" />
                    <rect x="647" y="424" width="304" height="550" />
                </g>
                <Arrow from={[2027, 36]} to={[1866, 191]} />
                <Arrow from={[1643, 567]} to={[1455, 803]} />
                <Arrow from={[1283, 816]} to={[959, 805]} />
            </Marks>
            <Tip $top="-9px" $left="1728px">①搜索上线币种</Tip>
            <Tip $top="327px" $left="1342px">②选择抢新币对</Tip>
            <Tip $top="785px" $left="1491px">③点击【抢新开盘】<br />前提：授权API交易或完成快速授权</Tip>
            <Tip $top="985px" $left="567px">④完成下单设置，支持市价抢新</Tip>
        </>
    )
}

function App() {
    return (
        <Page>
            <GlobalStyle />
            <TopBar />
            <Body>
                <LeftNav />
                <Main>
                    <PairTabs>
                        <ActivePair><Binance />
                            <span>LAYER/USDT<OpeningTag>即将开盘</OpeningTag></span>
                        </ActivePair>
                        <PairTab>
                            <PairName><Binance size={14} faded />BERA/USDT</PairName>
                            <PairQuote><span>5.727</span><span>8.42%</span></PairQuote>
                        </PairTab>
                        <AddTab aria-label="新增"><Icon size={14}><path d="M8 0v16M0 8h16" /></Icon></AddTab>
                    </PairTabs>
                    <Toolbar />
                    <DrawTools />
                    <Launch />
                    <StatusLine><button>筹</button><button>爆</button></StatusLine>
                    <Foot />
                </Main>
                <ToolRail />
            </Body>
            <SearchDropdown />
            <OrderPanel />
            <Tutorial />
        </Page>
    )
}

export default App
